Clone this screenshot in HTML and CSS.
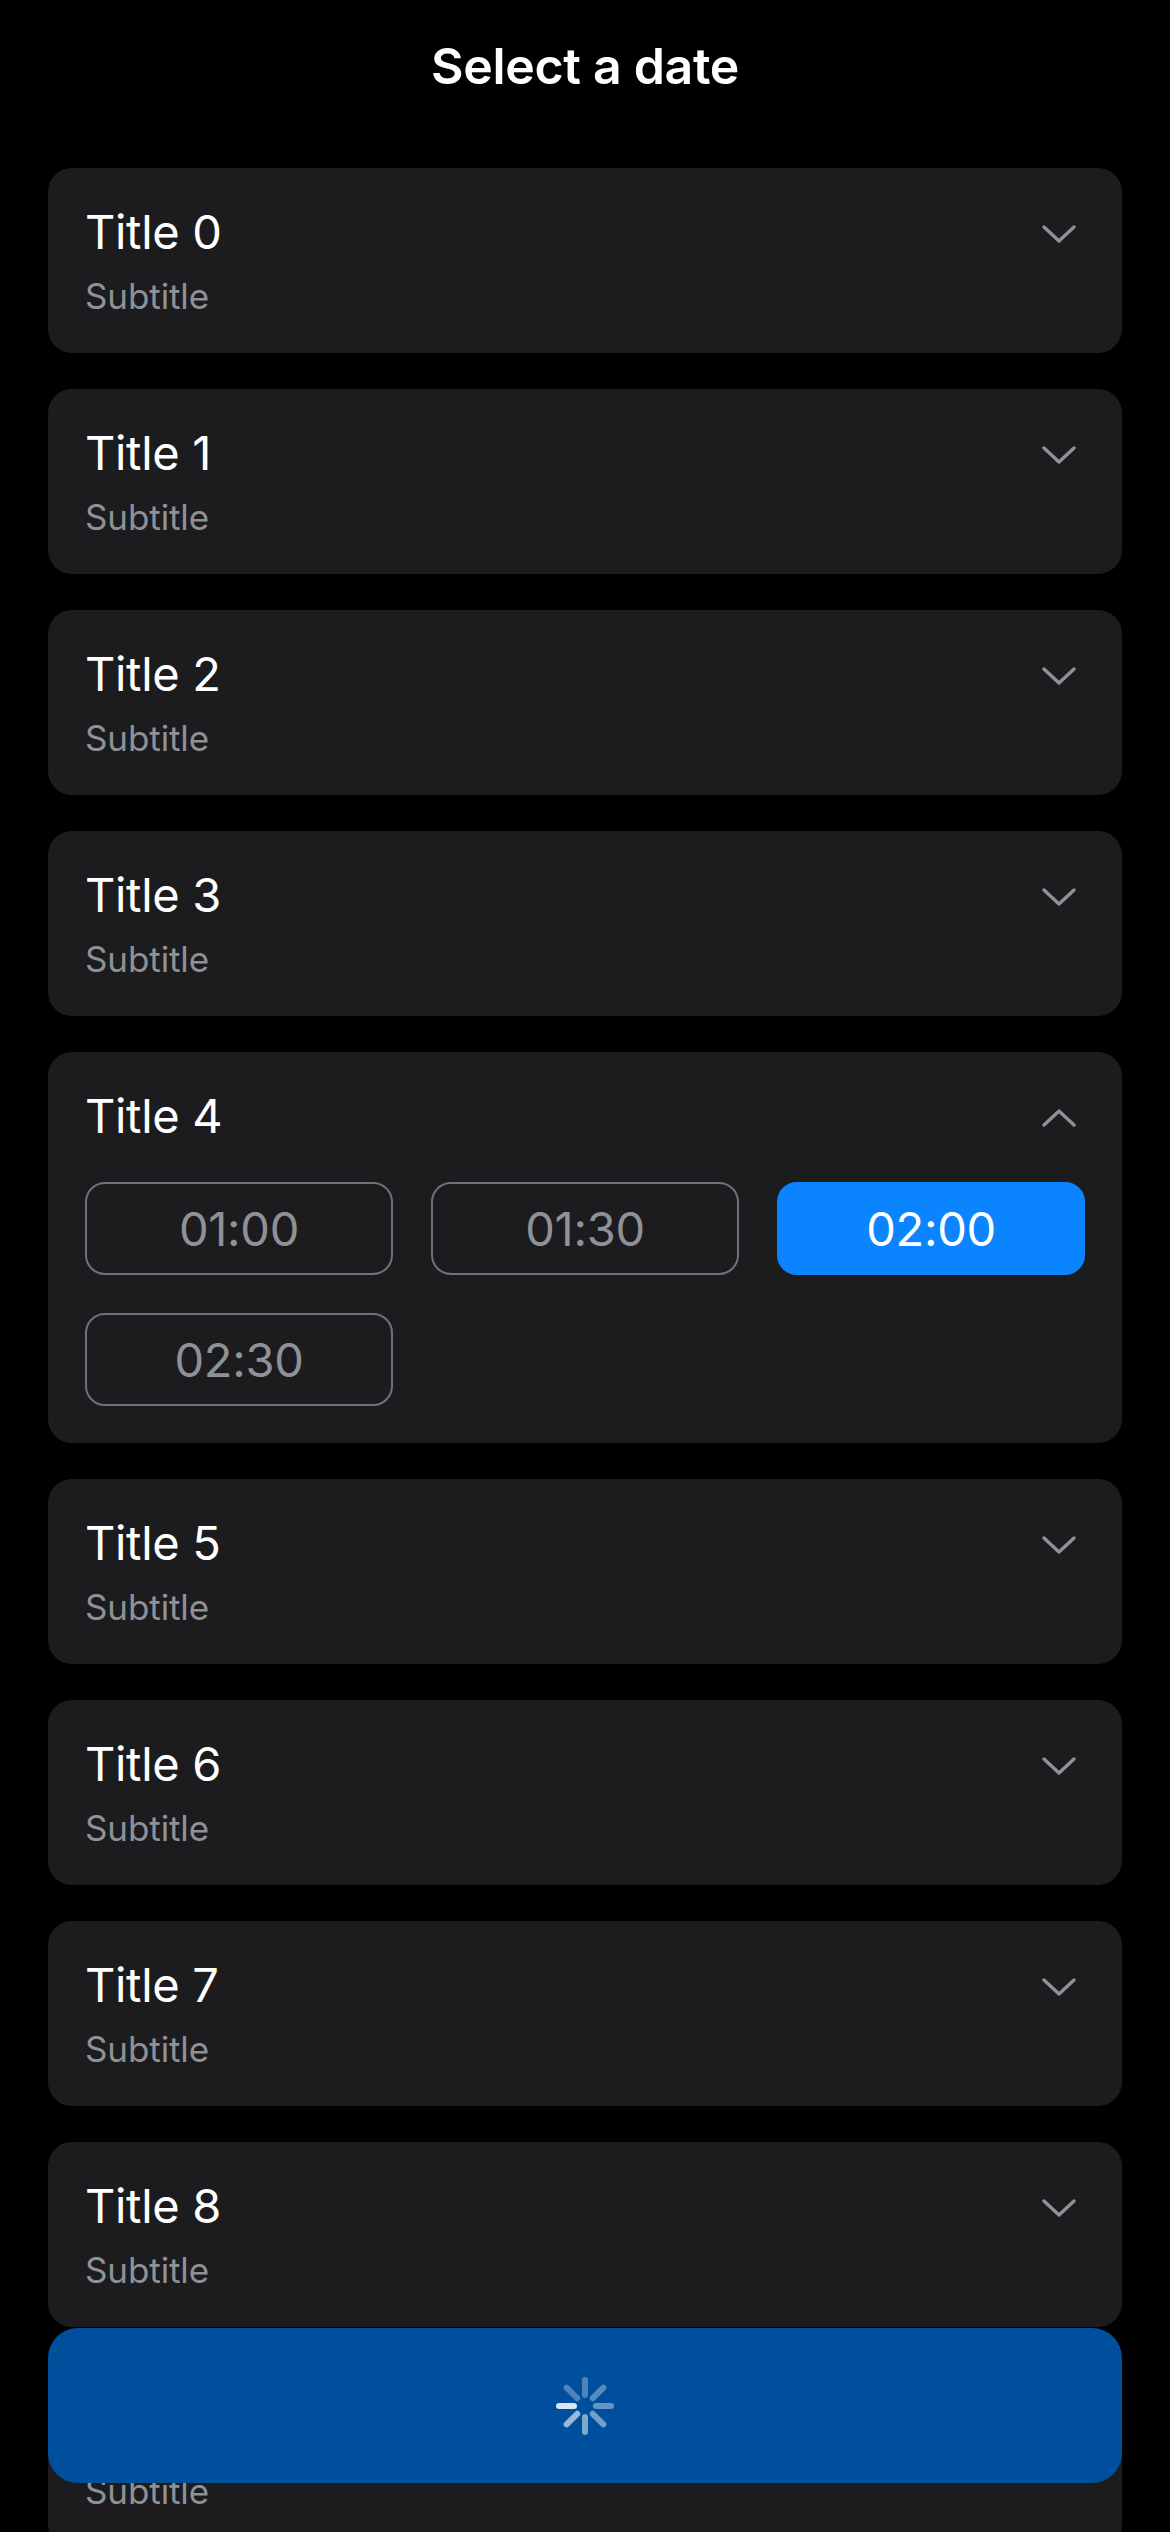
FILE: index.html
```html
<!DOCTYPE html>
<html lang="en">
<head>
<meta charset="utf-8">
<title>Select a date</title>
<link rel="stylesheet" href="styles.css">
</head>
<body>
<div class="screen">
  <h1 class="page-title">Select a date</h1>
  <div class="list">
    <div class="card">
      <div class="card-head"><span class="card-title">Title 0</span><svg class="chev" viewBox="0 0 34 18"><path d="M2 2 L17 16 L32 2"/></svg></div>
      <div class="card-sub">Subtitle</div>
    </div>
    <div class="card">
      <div class="card-head"><span class="card-title">Title 1</span><svg class="chev" viewBox="0 0 34 18"><path d="M2 2 L17 16 L32 2"/></svg></div>
      <div class="card-sub">Subtitle</div>
    </div>
    <div class="card">
      <div class="card-head"><span class="card-title">Title 2</span><svg class="chev" viewBox="0 0 34 18"><path d="M2 2 L17 16 L32 2"/></svg></div>
      <div class="card-sub">Subtitle</div>
    </div>
    <div class="card">
      <div class="card-head"><span class="card-title">Title 3</span><svg class="chev" viewBox="0 0 34 18"><path d="M2 2 L17 16 L32 2"/></svg></div>
      <div class="card-sub">Subtitle</div>
    </div>
    <div class="card open">
      <div class="card-head"><span class="card-title">Title 4</span><svg class="chev" viewBox="0 0 34 18"><path d="M2 16 L17 2 L32 16"/></svg></div>
      <div class="slots">
        <div class="slot">01:00</div>
        <div class="slot">01:30</div>
        <div class="slot selected">02:00</div>
        <div class="slot">02:30</div>
      </div>
    </div>
    <div class="card">
      <div class="card-head"><span class="card-title">Title 5</span><svg class="chev" viewBox="0 0 34 18"><path d="M2 2 L17 16 L32 2"/></svg></div>
      <div class="card-sub">Subtitle</div>
    </div>
    <div class="card">
      <div class="card-head"><span class="card-title">Title 6</span><svg class="chev" viewBox="0 0 34 18"><path d="M2 2 L17 16 L32 2"/></svg></div>
      <div class="card-sub">Subtitle</div>
    </div>
    <div class="card">
      <div class="card-head"><span class="card-title">Title 7</span><svg class="chev" viewBox="0 0 34 18"><path d="M2 2 L17 16 L32 2"/></svg></div>
      <div class="card-sub">Subtitle</div>
    </div>
    <div class="card">
      <div class="card-head"><span class="card-title">Title 8</span><svg class="chev" viewBox="0 0 34 18"><path d="M2 2 L17 16 L32 2"/></svg></div>
      <div class="card-sub">Subtitle</div>
    </div>
    <div class="card">
      <div class="card-head"><span class="card-title">Title 9</span><svg class="chev" viewBox="0 0 34 18"><path d="M2 2 L17 16 L32 2"/></svg></div>
      <div class="card-sub">Subtitle</div>
    </div>
  </div>
  <div class="confirm">
    <svg class="spinner" viewBox="-30 -30 60 60">
      <line x1="0" y1="-11" x2="0" y2="-26" transform="rotate(270)" stroke-opacity="0.85"/>
      <line x1="0" y1="-11" x2="0" y2="-26" transform="rotate(225)" stroke-opacity="0.6"/>
      <line x1="0" y1="-11" x2="0" y2="-26" transform="rotate(180)" stroke-opacity="0.5"/>
      <line x1="0" y1="-11" x2="0" y2="-26" transform="rotate(135)" stroke-opacity="0.45"/>
      <line x1="0" y1="-11" x2="0" y2="-26" transform="rotate(90)" stroke-opacity="0.4"/>
      <line x1="0" y1="-11" x2="0" y2="-26" transform="rotate(45)" stroke-opacity="0.35"/>
      <line x1="0" y1="-11" x2="0" y2="-26" transform="rotate(0)" stroke-opacity="0.3"/>
      <line x1="0" y1="-11" x2="0" y2="-26" transform="rotate(315)" stroke-opacity="0.3"/>
    </svg>
  </div>
</div>
</body>
</html>
```
FILE: styles.css
```css
html, body {
  margin: 0;
  padding: 0;
  background: #000;
}

body {
  font-family: Inter, "Noto Sans", "Liberation Sans", sans-serif;
  color: #fff;
}

.screen {
  position: relative;
  width: 1170px;
  height: 2532px;
  overflow: hidden;
  background: #000;
}

.page-title {
  margin: 0;
  padding-top: 36px;
  font-size: 50px;
  line-height: 60px;
  font-weight: 600;
  text-align: center;
  letter-spacing: -0.3px;
}

.list {
  display: flex;
  flex-direction: column;
  gap: 36px;
  padding: 72px 48px 0;
}

.card {
  background: #1c1c1e;
  border-radius: 24px;
  padding: 36px 37px 36px 37px;
}

.card.open {
  padding-bottom: 37px;
}

.card-head {
  display: flex;
  align-items: center;
  justify-content: space-between;
  height: 56px;
}

.card-title {
  font-size: 47px;
  line-height: 56px;
  font-weight: 400;
  letter-spacing: -0.3px;
}

.chev {
  width: 34px;
  height: 18px;
  margin-right: 9px;
  margin-top: 4px;
  fill: none;
  stroke: #8e9196;
  stroke-width: 3.4;
  stroke-linecap: round;
  stroke-linejoin: round;
}

.card-sub {
  margin-top: 15px;
  font-size: 35px;
  line-height: 42px;
  color: #8e9196;
  letter-spacing: -0.1px;
}

.slots {
  margin-top: 38px;
  display: grid;
  grid-template-columns: repeat(3, 1fr);
  gap: 38px;
}

.slot {
  box-sizing: border-box;
  height: 93px;
  border: 2.5px solid #6c7278;
  border-radius: 20px;
  display: flex;
  align-items: center;
  justify-content: center;
  font-size: 47px;
  color: #8e9297;
  letter-spacing: -0.3px;
}

.slot.selected {
  background: #0a84ff;
  border-color: #0a84ff;
  color: #fff;
}

.confirm {
  position: absolute;
  left: 48px;
  right: 48px;
  bottom: 49px;
  height: 155px;
  border-radius: 30px;
  background: #004f9c;
  display: flex;
  align-items: center;
  justify-content: center;
}

.spinner {
  width: 60px;
  height: 60px;
  stroke: #fff;
  stroke-width: 6;
  stroke-linecap: round;
}
```
